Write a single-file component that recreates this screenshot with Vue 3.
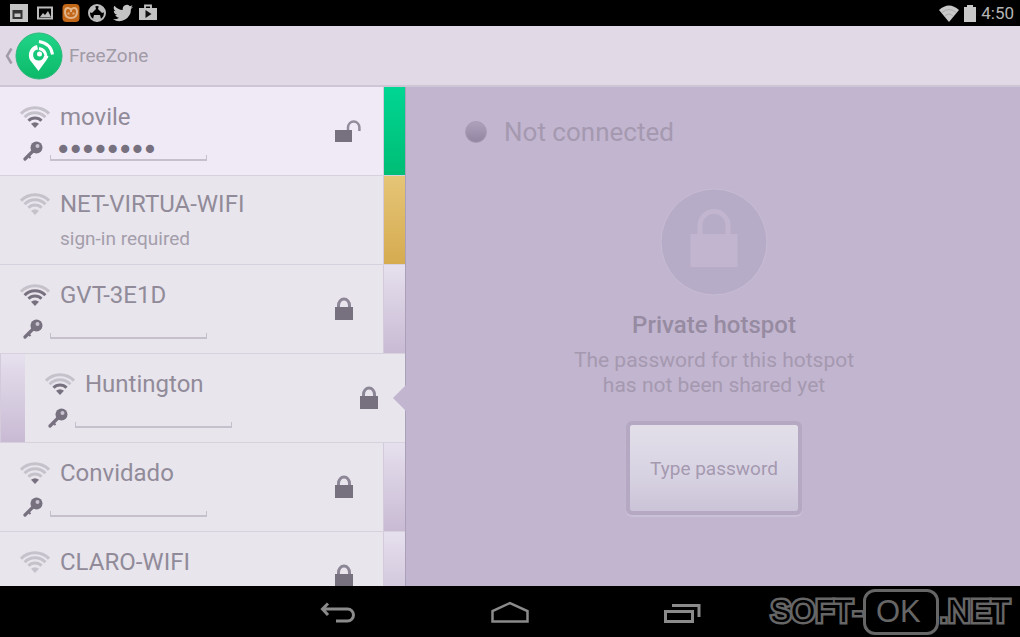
<script setup>
import { ref } from 'vue'

const networks = ref([
  { id: 'movile', name: 'movile', level: 2, lock: 'open', tone: 'green', password: 'abcdefgh' },
  { id: 'net', name: 'NET-VIRTUA-WIFI', level: 0, note: 'sign-in required', tone: 'amber' },
  { id: 'gvt', name: 'GVT-3E1D', level: 3, lock: 'closed', tone: 'lilac', password: '' },
  { id: 'huntington', name: 'Huntington', level: 2, lock: 'closed', tone: 'lilac', password: '', selected: true },
  { id: 'convidado', name: 'Convidado', level: 1, lock: 'closed', tone: 'lilac', password: '' },
  { id: 'claro', name: 'CLARO-WIFI', level: 0, lock: 'closed', tone: 'lilac', password: '' }
])

const arcs = [
  { level: 4, d: 'M1 7.6A19.4 19.4 0 0 1 29 7.6' },
  { level: 3, d: 'M4.600 11.200A14.300 14.300 0 0 1 25.400 11.200' },
  { level: 2, d: 'M8.500 14.800A9 9 0 0 1 21.500 14.800' }
]
</script>

<template>
  <div class="device">
    <div class="status">
      <div class="tray">
        <svg class="tray-icon" viewBox="0 0 20 20"><path fill="#c4c4c4" d="M1 1h18v18H1z" /><path d="M4.500 15v-7h8v7zM4 9.500h9" fill="none" stroke="#333" stroke-width="2" /></svg>
        <svg class="tray-icon" viewBox="0 0 20 20"><path d="M3 4.500h14v11H3z" fill="none" stroke="#bcbcbc" stroke-width="2" /><path d="M5 14l3-4 2 2 3-4 3 6z" fill="#bcbcbc" /></svg>
        <svg class="tray-icon" viewBox="0 0 20 20"><rect x="1.500" y="1" width="17" height="18" rx="4" fill="#c26718" /><path d="M4 9q0-4 3-4 2 0 3 2 1-2 3-2 3 0 3 4 0 6-6 6T4 9z" fill="none" stroke="#e2b489" stroke-width="2" /><path d="M6.500 10.500h2M11.500 10.500h2M10 7v2" stroke="#e2b489" stroke-width="2" /></svg>
        <svg class="tray-icon" viewBox="0 0 20 20"><circle cx="10" cy="10" r="8" fill="none" stroke="#bbb" stroke-width="2" /><path d="M3 5l5-3 1 4-4 4-3-1zM17 5l-5-3-1 4 4 4 3-1zM7 12h6l1 4-4 3-4-3z" fill="#bbb" /></svg>
        <svg class="tray-icon" viewBox="0 0 24 24"><path fill="#c4c4c4" d="M24 4.600a10 10 0 0 1-2.800.8 5 5 0 0 0 2.100-2.700 10 10 0 0 1-3.100 1.200 4.900 4.900 0 0 0-8.400 4.500A14 14 0 0 1 1.700 3.200a4.900 4.900 0 0 0 1.500 6.600 4.900 4.900 0 0 1-2.200-.6 4.900 4.900 0 0 0 4 4.900 5 5 0 0 1-2.300.1 4.900 4.900 0 0 0 4.600 3.400A9.900 9.900 0 0 1 0 19.500 14 14 0 0 0 21.500 7.100 10 10 0 0 0 24 4.600z" /></svg>
        <svg class="tray-icon" viewBox="0 0 20 20"><path d="M6 5V2.500h6V5" fill="none" stroke="#c4c4c4" stroke-width="1.800" /><path fill="#c4c4c4" d="M0 5h18v12H0z" /><path d="M6.500 7v8l6-4z" fill="#111" /></svg>
      </div>
      <div class="clock">
        <svg class="signal" viewBox="0 0 20 17"><path d="M0 5Q10-4 20 5L10 17z" fill="#c8c8c8" /><path d="M3 7.500q7-6 14 0M6 11q4-4 8 0" fill="none" stroke="#aaa" /></svg>
        <svg class="battery" viewBox="0 0 12 17"><path d="M3 0h6v2h3v15H0V2h3z" fill="#c8c8c8" /></svg>
        <span>4:50</span>
      </div>
    </div>

    <header class="bar">
      <button class="back" type="button" aria-label="Back">
        <svg class="chevron" viewBox="0 0 9 18"><path d="M7.500 1.500L3 9l4.500 7.500" fill="none" stroke="#a19ca8" stroke-width="2.500" /></svg>
        <svg class="logo" viewBox="0 0 48 48">
          <defs><linearGradient id="logoFill" x2="0" y2="1"><stop stop-color="#20d488" /><stop offset="1" stop-color="#0cb968" /></linearGradient></defs>
          <circle cx="24" cy="24" r="23" fill="url(#logoFill)" stroke="#2bb77a" />
          <path d="M23.500 39L15 28A10.500 10.500 0 0 1 22 13l1 4.500A5.500 5.500 0 1 0 29 24h4.500q-.500 2-2 4z" fill="#fff" />
          <path d="M24 16.500q6 1 7 7.500" fill="none" stroke="#fff" stroke-width="3" />
          <path d="M24 9.500q12 2 13.500 13" fill="none" stroke="#fff" stroke-width="3" />
          <circle cx="24.500" cy="22" r="2.500" fill="#fff" />
        </svg>
      </button>
      <h1>FreeZone</h1>
    </header>

    <div class="content">
      <ul class="list">
        <li v-for="n in networks" :key="n.id" class="row" :class="{ selected: n.selected, open: n.lock === 'open' }">
          <div class="card" :class="{ noted: n.note }">
            <div class="info">
              <div class="line">
                <svg class="wifi" viewBox="0 0 30 22">
                  <path v-for="a in arcs" :key="a.level" :d="a.d" class="arc" :class="{ lit: n.level >= a.level }" />
                  <path d="M15 22l-4-4.200q4-3.200 8 0z" class="dot" :class="{ lit: n.level > 0 }" />
                </svg>
                <span class="name">{{ n.name }}</span>
              </div>
              <p v-if="n.note" class="note">{{ n.note }}</p>
              <div v-else class="line secret">
                <label :for="n.id" :aria-label="'Password for ' + n.name">
                  <svg class="key" viewBox="0 0 20 20">
                    <path d="M2 18L11 9" stroke="#77707f" stroke-width="3.200" stroke-linecap="round" />
                    <path d="M4.500 14l3 3" stroke="#77707f" stroke-width="2" />
                    <circle cx="13.500" cy="6.500" r="6" fill="#77707f" />
                    <circle cx="14.500" cy="5" r="2" fill="#c9c3d1" />
                  </svg>
                </label>
                <input :id="n.id" v-model="n.password" type="password" autocomplete="off">
              </div>
            </div>
            <svg v-if="n.lock === 'closed'" class="lock" viewBox="0 0 18 24">
              <path d="M3.500 13V8.500a5.500 6.500 0 0 1 11 0V13" fill="none" stroke="#8d8696" stroke-width="3" />
              <path d="M0 10h18v13H0z" fill="#77707f" />
            </svg>
            <svg v-else-if="n.lock === 'open'" class="lock unlocked" viewBox="0 0 27 24">
              <path d="M14 12V8.500a5.700 6 0 0 1 11.400 0V12" fill="none" stroke="#938c9c" stroke-width="2.500" />
              <path d="M1 11h17v12H1z" fill="#77707f" />
            </svg>
          </div>
          <span class="strip" :class="n.tone"></span>
          <span v-if="n.selected" class="notch"></span>
        </li>
      </ul>

      <main class="panel">
        <div class="state"><span class="led"></span>Not connected</div>
        <section class="hotspot">
          <svg class="badge" viewBox="0 0 108 108">
            <circle cx="54" cy="54" r="53" fill="#b6acc7" stroke="#c8bdd5" />
            <path d="M40 48V37.500a14 14 0 0 1 28 0V48" fill="none" stroke="#c2b5cf" stroke-width="5" />
            <path d="M30.500 46h47v33h-47z" fill="#c2b5cf" />
          </svg>
          <h2>Private hotspot</h2>
          <p>The password for this hotspot<br>has not been shared yet</p>
          <button class="type" type="button">Type password</button>
        </section>
      </main>
    </div>

    <nav class="nav">
      <span></span>
      <div class="keys">
        <button type="button" aria-label="Back"><svg viewBox="0 0 40 26"><path d="M11 4.500L5.500 10l5.500 6M5.500 10h25a5.500 5.500 0 0 1 0 12H19" fill="none" stroke="#8b8b8b" stroke-width="3" /></svg></button>
        <button type="button" aria-label="Home"><svg viewBox="0 0 40 26"><path d="M2.500 22.500V12L20 4l17.500 8v10.500z" fill="none" stroke="#8b8b8b" stroke-width="2.500" /></svg></button>
        <button type="button" aria-label="Recent apps"><svg viewBox="0 0 40 26"><path d="M2.500 12.500h27v10h-27z" fill="none" stroke="#8b8b8b" stroke-width="3" /><path d="M9 6.500h27V18" fill="none" stroke="#8b8b8b" stroke-width="3" /></svg></button>
      </div>
      <div class="mark"><span class="outlined">SOFT-</span><span class="boxed">OK</span><span class="outlined">.NET</span></div>
    </nav>
  </div>
</template>

<style>
body { margin: 0; background: #000; }
</style>

<style scoped>
* { box-sizing: border-box; }
.device { display: flex; flex-direction: column; height: 100vh; overflow: hidden; font-family: Roboto, "Noto Sans", sans-serif; color: #918b99; }
button { padding: 0; border: 0; background: none; font: inherit; color: inherit; }
svg { display: block; }
h1, h2, p, ul { margin: 0; padding: 0; font-weight: 400; }

.status { flex: 0 0 26px; display: flex; justify-content: space-between; align-items: center; padding: 0 6px 0 9px; background: #000; }
.tray { display: flex; gap: 6px; }
.tray-icon { width: 20px; height: 20px; }
.clock { display: flex; align-items: center; gap: 5px; font-size: 17px; color: #b5b5b5; }
.signal { width: 20px; height: 17px; }
.battery { width: 12px; height: 17px; }

.bar { flex: 0 0 61px; display: flex; align-items: center; gap: 6px; padding-left: 4px; background: #e2d9e6; border-bottom: 2px solid #cec6d5; }
.back { display: flex; align-items: center; gap: 2px; }
.chevron { width: 9px; height: 18px; }
.logo { width: 48px; height: 48px; }
h1 { font-size: 19px; color: #a09ba6; }

.content { flex: 1; display: flex; min-height: 0; overflow: hidden; }
.list { flex: 0 0 406px; list-style: none; background: #e8e5ed; border-right: 1px solid #aba0b9; }
.row { position: relative; display: flex; height: 89px; border-bottom: 1px solid #d6d1dd; }
.row.selected { flex-direction: row-reverse; }
.row.open { background: #efeaf5; }
.card { flex: 1; display: flex; justify-content: space-between; align-items: flex-start; padding: 14px 30px 0 20px; }
.open .card { padding-right: 22px; }
.selected .card { padding-right: 27px; }
.card.noted { padding-top: 12px; }
.line { display: flex; align-items: center; gap: 10px; height: 32px; }
.wifi { width: 30px; height: 22px; }
.arc { fill: none; stroke: #c6c2cb; stroke-width: 3; }
.arc.lit { stroke: #77707f; }
.dot { fill: #c6c2cb; }
.dot.lit { fill: #77707f; }
.name { font-size: 24px; }
.note { padding-left: 40px; font-size: 19px; line-height: 38px; color: #a49eab; }
.secret { align-items: flex-end; gap: 7px; height: 28px; padding-left: 3px; }
.key { width: 20px; height: 20px; }
input { width: 157px; height: 28px; padding: 6px 7px 0; border: 0; outline: 0; color: #77707f; font: 21px/22px "DejaVu Sans", sans-serif; -webkit-text-stroke: 2px #77707f;
  background: linear-gradient(#c5c0cb, #c5c0cb) bottom / 100% 2px no-repeat, linear-gradient(#c5c0cb, #c5c0cb) left bottom / 1px 6px no-repeat, linear-gradient(#c5c0cb, #c5c0cb) right bottom / 1px 6px no-repeat; }
.lock { width: 18px; height: 24px; margin-top: 18px; }
.unlocked { width: 27px; }
.strip { flex: 0 0 22px; border-left: 1px solid #d3cbdc; }
.selected .strip { flex-basis: 25px; }
.green { background: linear-gradient(#00d693, #00bd75); }
.amber { background: linear-gradient(#e5c577, #d6ab50); }
.lilac { background: linear-gradient(#e6e0ee, #c8bad3); }
.notch { position: absolute; right: -1px; top: 31px; width: 13px; height: 26px; background: #c2b5cf; clip-path: polygon(100% 0, 100% 100%, 0 50%); }

.panel { flex: 1; padding-top: 29px; background: #c2b5cf; color: #a599b0; }
.state { display: flex; align-items: center; gap: 17px; height: 32px; padding-left: 59px; font-size: 26px; }
.led { width: 22px; height: 22px; border-radius: 50%; border: 1px solid #a79bb5; background: linear-gradient(#ada1bc, #9185a1); }
.hotspot { display: flex; flex-direction: column; align-items: center; padding: 40px 0 0 2px; text-align: center; }
.badge { width: 108px; height: 108px; }
h2 { margin-top: 13px; font-size: 24px; line-height: 32px; font-weight: 500; color: #968ba1; }
.hotspot p { margin-top: 7px; font-size: 21px; line-height: 25px; }
.type { width: 176px; height: 94px; margin-top: 23px; border: 4px solid #b4a8c3; border-radius: 6px; background: linear-gradient(#e3dfe9, #d7d2e2 60%, #cbc3d7) padding-box; box-shadow: 0 2px 1px #cbc1d7; font-size: 19px; }

.nav { flex: 0 0 51px; display: grid; grid-template-columns: 1fr 386px 1fr; align-items: center; background: #000; }
.keys { display: flex; justify-content: space-between; }
.keys svg { width: 40px; height: 26px; }
.mark { display: flex; align-items: center; justify-content: flex-end; padding-right: 10px; font: 31px/44px "Liberation Sans", Arial, sans-serif; font-kerning: none; color: #666; }
.outlined { color: #000; -webkit-text-stroke: 5px #666; paint-order: stroke fill; stroke-linejoin: round; }
.boxed { width: 76px; height: 46px; padding-right: 6px; border: 3px solid #666; border-radius: 12px; line-height: 40px; text-align: center; }
</style>
